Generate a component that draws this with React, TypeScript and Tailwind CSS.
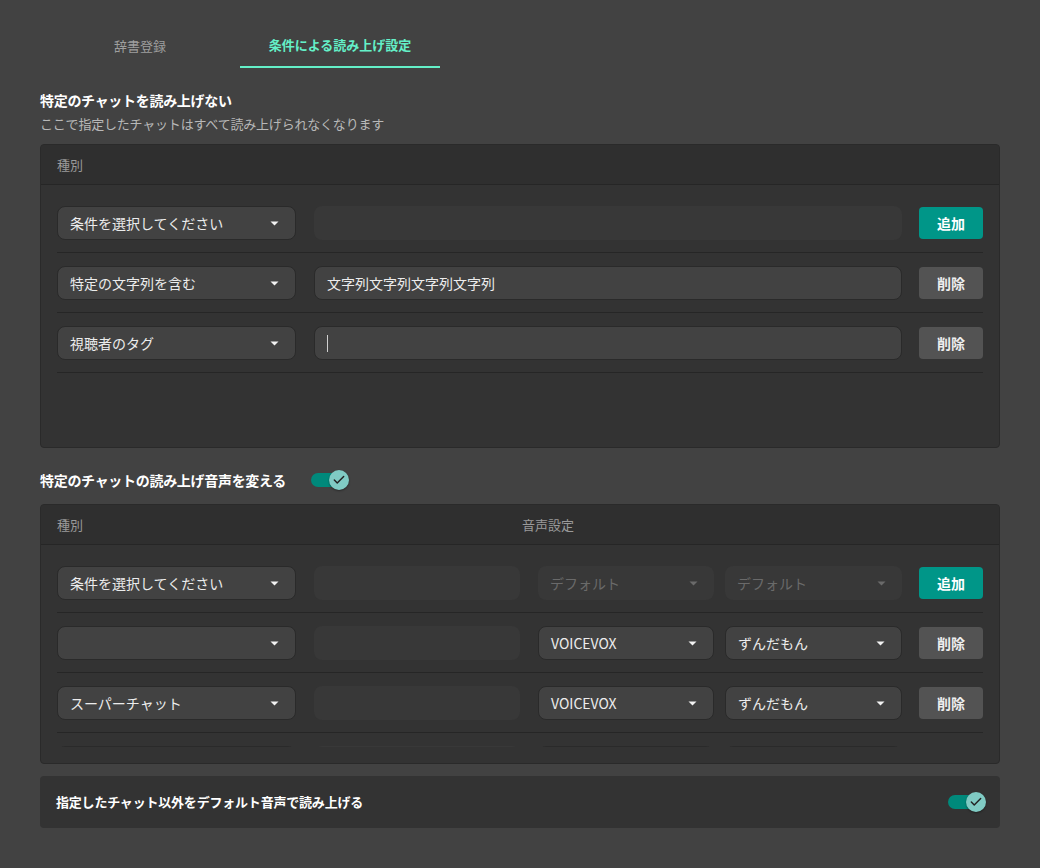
import { Check } from "lucide-react";

const font = { fontFamily: '"Noto Sans CJK JP", "Noto Sans", sans-serif' };

function Caret({ dim = false }: { dim?: boolean }) {
  return (
    <svg width="9" height="5" viewBox="0 0 9 5" className="shrink-0">
      <path d="M0.5 0.5 H8.5 L4.5 4.5 Z" fill={dim ? "#6a6a6a" : "#f2f2f2"} />
    </svg>
  );
}

function Select({
  value,
  width,
  disabled = false,
}: {
  value: string;
  width: string;
  disabled?: boolean;
}) {
  return (
    <div
      className={`${width} h-[34px] shrink-0 rounded-lg flex items-center justify-between pl-3 pr-4 text-sm ${
        disabled
          ? "bg-[#383838] text-[#6a6a6a]"
          : "bg-[#424242] border border-[#2a2a2a] text-[#ececec]"
      }`}
    >
      <span>{value}</span>
      <Caret dim={disabled} />
    </div>
  );
}

function TextBox({
  value,
  width,
  empty = false,
  caret = false,
}: {
  value?: string;
  width: string;
  empty?: boolean;
  caret?: boolean;
}) {
  return (
    <div
      className={`${width} h-[34px] shrink-0 rounded-lg flex items-center px-3 text-sm text-[#ececec] ${
        empty ? "bg-[#383838]" : "bg-[#424242] border border-[#2a2a2a]"
      }`}
    >
      {value}
      {caret && <span className="w-px h-[17px] bg-[#cfcfcf]" />}
    </div>
  );
}

function ActionButton({ kind }: { kind: "add" | "remove" }) {
  return kind === "add" ? (
    <button className="w-16 h-8 shrink-0 rounded bg-[#009688] text-white text-sm font-bold">
      追加
    </button>
  ) : (
    <button className="w-16 h-8 shrink-0 rounded bg-[#535353] text-[#eeeeee] text-sm font-bold">
      削除
    </button>
  );
}

function Toggle() {
  return (
    <div className="relative w-[36px] h-5 flex items-center">
      <div className="w-[34px] h-[14px] rounded-full bg-[#00897b]" />
      <div className="absolute right-[-2px] top-0 w-5 h-5 rounded-full bg-[#80cbc4] flex items-center justify-center shadow-[0_1px_2px_rgba(0,0,0,0.4)]">
        <Check className="w-[14px] h-[14px] text-[#222]" strokeWidth={2.5} />
      </div>
    </div>
  );
}

function Row({ children }: { children: React.ReactNode }) {
  return (
    <div className="flex items-center pt-[13px] pb-3 border-b border-[#262626]">{children}</div>
  );
}

function PanelHeader({ children }: { children: React.ReactNode }) {
  return (
    <div className="h-10 flex items-center px-4 bg-[#2f2f2f] border-b border-[#262626] text-[13px] text-[#9a9a9a]">
      {children}
    </div>
  );
}

const voiceRows = [
  { kind: "", engine: "VOICEVOX", speaker: "ずんだもん", removable: true },
  { kind: "スーパーチャット", engine: "VOICEVOX", speaker: "ずんだもん", removable: true },
  { kind: "", engine: "", speaker: "", removable: false },
];

export default function App() {
  return (
    <div className="min-h-[868px] bg-[#424242] px-10" style={font}>
      {/* tabs */}
      <div className="pt-6 flex">
        <div className="w-[200px] h-11 flex items-center justify-center text-[13px] text-[#9e9e9e]">
          辞書登録
        </div>
        <div className="w-[200px] h-11 flex items-center justify-center text-[13px] font-bold text-[#64f0c8] border-b-2 border-[#64f0c8]">
          条件による読み上げ設定
        </div>
      </div>

      {/* muted chats */}
      <h2 className="mt-[22px] text-sm leading-5 font-bold text-white tracking-[-0.3px]">
        特定のチャットを読み上げない
      </h2>
      <p className="mt-1 text-[13px] leading-5 text-[#b8b8b8] tracking-[-0.2px]">
        ここで指定したチャットはすべて読み上げられなくなります
      </p>

      <div className="mt-[10px] rounded bg-[#333333] border border-[#2a2a2a] overflow-hidden">
        <PanelHeader>種別</PanelHeader>
        <div className="px-4 pt-2 pb-4">
          <div className="min-h-[238px]">
            <Row>
              <Select value="条件を選択してください" width="w-[239px]" />
              <div className="ml-[18px]">
                <TextBox width="w-[588px]" empty />
              </div>
              <div className="ml-[17px]">
                <ActionButton kind="add" />
              </div>
            </Row>
            <Row>
              <Select value="特定の文字列を含む" width="w-[239px]" />
              <div className="ml-[18px]">
                <TextBox width="w-[588px]" value="文字列文字列文字列文字列" />
              </div>
              <div className="ml-[17px]">
                <ActionButton kind="remove" />
              </div>
            </Row>
            <Row>
              <Select value="視聴者のタグ" width="w-[239px]" />
              <div className="ml-[18px]">
                <TextBox width="w-[588px]" caret />
              </div>
              <div className="ml-[17px]">
                <ActionButton kind="remove" />
              </div>
            </Row>
          </div>
        </div>
      </div>

      {/* per-chat voice */}
      <div className="mt-5 h-6 flex items-center">
        <h2 className="text-sm font-bold text-white tracking-[-0.3px]">
          特定のチャットの読み上げ音声を変える
        </h2>
        <div className="ml-[25px]">
          <Toggle />
        </div>
      </div>

      <div className="mt-3 rounded bg-[#333333] border border-[#2a2a2a] overflow-hidden">
        <PanelHeader>
          <span className="w-[465px]">種別</span>
          <span>音声設定</span>
        </PanelHeader>
        <div className="px-4 pt-2 pb-4">
          <div className="h-[194px] overflow-hidden">
            <Row>
              <Select value="条件を選択してください" width="w-[239px]" />
              <div className="ml-[18px]">
                <TextBox width="w-[206px]" empty />
              </div>
              <div className="ml-[18px]">
                <Select value="デフォルト" width="w-[176px]" disabled />
              </div>
              <div className="ml-[11px]">
                <Select value="デフォルト" width="w-[177px]" disabled />
              </div>
              <div className="ml-[17px]">
                <ActionButton kind="add" />
              </div>
            </Row>
            {voiceRows.map((r, i) => (
              <Row key={i}>
                <Select value={r.kind} width="w-[239px]" />
                <div className="ml-[18px]">
                  <TextBox width="w-[206px]" empty />
                </div>
                <div className="ml-[18px]">
                  <Select value={r.engine} width="w-[176px]" />
                </div>
                <div className="ml-[11px]">
                  <Select value={r.speaker} width="w-[177px]" />
                </div>
                <div className="ml-[17px]">
                  {r.removable ? <ActionButton kind="remove" /> : <div className="w-16 h-8" />}
                </div>
              </Row>
            ))}
          </div>
        </div>
      </div>

      <div className="mt-3 h-[52px] rounded bg-[#333333] flex items-center justify-between pl-4 pr-4">
        <span className="text-[13px] font-bold text-white tracking-[-0.2px]">
          指定したチャット以外をデフォルト音声で読み上げる
        </span>
        <Toggle />
      </div>
    </div>
  );
}
